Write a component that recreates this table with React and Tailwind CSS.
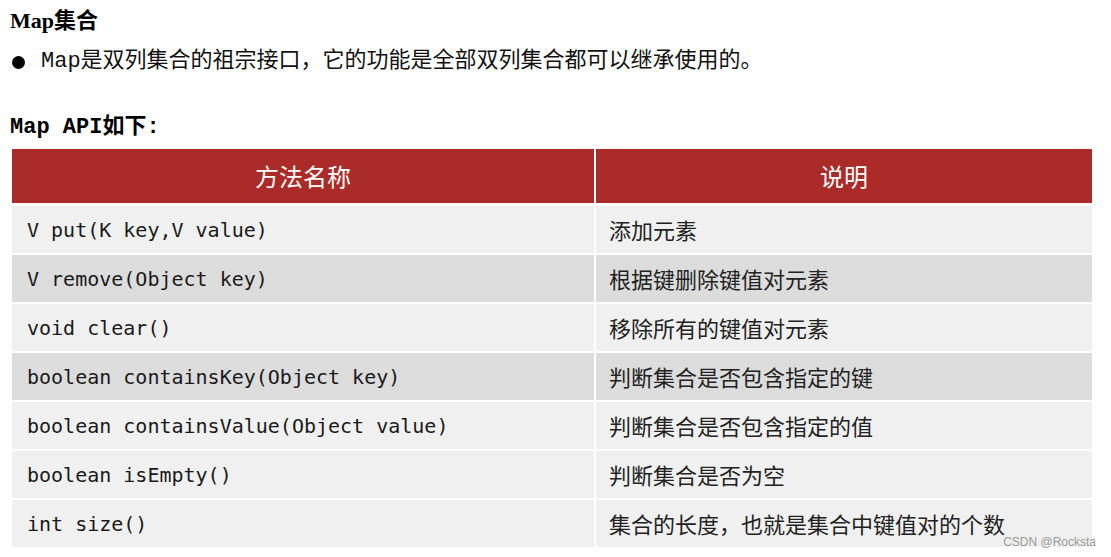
import React from "react";

const rows = [
  ["V put(K key,V value)", "添加元素", false],
  ["V remove(Object key)", "根据键删除键值对元素", true],
  ["void clear()", "移除所有的键值对元素", false],
  ["boolean containsKey(Object key)", "判断集合是否包含指定的键", true],
  ["boolean containsValue(Object value)", "判断集合是否包含指定的值", false],
  ["boolean isEmpty()", "判断集合是否为空", false],
  ["int size()", "集合的长度，也就是集合中键值对的个数", false],
];

export default function App() {
  const serif = { fontFamily: '"Liberation Serif", "Noto Sans CJK SC", serif' };
  return (
    <div className="relative w-[1111px] h-[557px] bg-white overflow-hidden text-black">
      <div className="pt-[6px] pl-[10px]">
        <div className="h-[30px] leading-[30px] text-[22px] font-bold" style={serif}>
          Map集合
        </div>
        <div className="mt-[11px] h-[30px] flex items-center">
          <div className="ml-[2px] w-[13px] h-[13px] rounded-full bg-black" />
          <div
            className="ml-[16px] text-[22px] leading-[30px] text-[#111]"
            style={{ fontFamily: '"Liberation Mono", "Noto Sans CJK SC", monospace' }}
          >
            Map是双列集合的祖宗接口，它的功能是全部双列集合都可以继承使用的。
          </div>
        </div>
        <div
          className="mt-[36px] h-[30px] leading-[30px] text-[22px] font-bold"
          style={{ fontFamily: '"Liberation Mono", "Noto Sans CJK SC", monospace' }}
        >
          Map API如下:
        </div>
      </div>
      <div className="ml-[12px] mt-[6px] w-[1080px]">
        <div className="flex h-[54px] gap-[2px] bg-white">
          <div
            className="w-[582px] bg-[#AA2B27] text-white text-[24px] flex items-center justify-center"
            style={{ fontFamily: '"Noto Sans CJK SC", sans-serif' }}
          >
            方法名称
          </div>
          <div
            className="flex-1 bg-[#AA2B27] text-white text-[24px] flex items-center justify-center"
            style={{ fontFamily: '"Noto Sans CJK SC", sans-serif' }}
          >
            说明
          </div>
        </div>
        <div className="mt-[3px] flex flex-col gap-[2px]">
          {rows.map(([m, d, dark], i) => (
            <div key={i} className="flex h-[47px] gap-[2px]">
              <div
                className={`w-[582px] flex items-center pl-[15px] text-[20px] text-[#1a1a1a] ${
                  dark ? "bg-[#DCDCDC]" : "bg-[#F0F0F0]"
                }`}
                style={{ fontFamily: '"DejaVu Sans Mono", monospace' }}
              >
                {m}
              </div>
              <div
                className={`flex-1 flex items-center pl-[13px] text-[22px] text-[#222] ${
                  dark ? "bg-[#DCDCDC]" : "bg-[#F0F0F0]"
                }`}
                style={{ fontFamily: '"Noto Sans CJK SC", sans-serif' }}
              >
                {d}
              </div>
            </div>
          ))}
        </div>
      </div>
      <div
        className="absolute right-[15px] bottom-[8px] text-[12px] leading-[14px] text-[#9a9a9a]"
        style={{ fontFamily: '"Liberation Sans", sans-serif' }}
      >
        CSDN @Rocksta
      </div>
    </div>
  );
}
